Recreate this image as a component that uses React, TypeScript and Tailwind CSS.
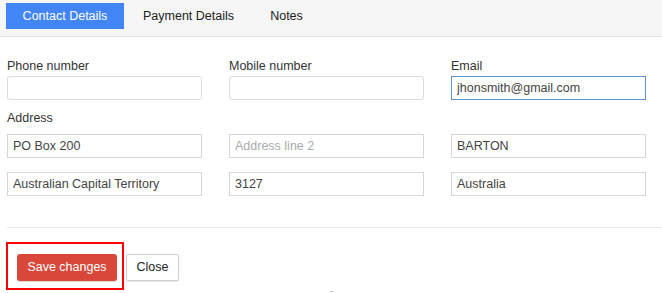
import { useState } from "react";

const tabs = ["Contact Details", "Payment Details", "Notes"];
const tabWidths = ["w-[118px]", "w-[129px]", "w-[67px]"];

function Field({ label, value, focused }: { label: string; value: string; focused?: boolean }) {
  return (
    <div className="flex flex-col">
      <label className="h-[16px] leading-[16px] text-[12.5px] text-[#333]">{label}</label>
      <input
        defaultValue={value}
        className={
          focused
            ? "mt-[2px] h-[24px] w-full border border-[#5b93d3] bg-white px-[5px] text-[12.5px] text-[#444] outline-none"
            : "mt-[2px] h-[24px] w-full rounded-[3px] border border-[#dcdcdc] bg-white px-[5px] text-[12.5px] text-[#444] outline-none"
        }
      />
    </div>
  );
}

function AddrInput({ value, placeholder }: { value?: string; placeholder?: string }) {
  return (
    <input
      defaultValue={value}
      placeholder={placeholder}
      className="h-[24px] w-full border border-[#d6d6d6] bg-white px-[5px] text-[12.5px] text-[#444] placeholder:text-[#aaa] outline-none"
    />
  );
}

export default function App() {
  const [tab, setTab] = useState(0);

  return (
    <div className="w-[662px] h-[293px] overflow-hidden bg-white font-['Liberation_Sans',Arial,sans-serif] text-[#333]">
      <div className="h-[37px] bg-[#f6f6f6] border-b border-[#e2e2e2] flex items-start pt-[3px] pl-[6px]">
        {tabs.map((t, i) => (
          <button
            key={t}
            onClick={() => setTab(i)}
            className={
              (tab === i ? "bg-[#4285f4] text-white " : "text-[#222] ") +
              tabWidths[i] +
              " h-[26px] text-[12.5px] text-center"
            }
          >
            {t}
          </button>
        ))}
      </div>

      <div className="px-[7px] pt-[21px]">
        <div className="grid grid-cols-[195px_195px_195px] gap-x-[27px]">
          <Field label="Phone number" value="" />
          <Field label="Mobile number" value="" />
          <Field label="Email" value="jhonsmith@gmail.com" focused />
        </div>

        <div className="mt-[10px] h-[16px] leading-[16px] text-[12.5px]">Address</div>
        <div className="mt-[8px] grid grid-cols-[195px_195px_195px] gap-x-[27px] gap-y-[14px]">
          <AddrInput value="PO Box 200" />
          <AddrInput placeholder="Address line 2" />
          <AddrInput value="BARTON" />
          <AddrInput value="Australian Capital Territory" />
          <AddrInput value="3127" />
          <AddrInput value="Australia" />
        </div>

        <div className="mt-[31px] -mr-[7px] border-t border-[#e8e8e8]" />

        <div className="mt-[14px] -ml-px flex items-start">
          <div className="border-2 border-[#f00] pl-[9px] pr-[5px] pt-[10px] pb-[7px]">
            <button className="h-[27px] w-[100px] rounded-[3px] bg-[#d8473a] text-[12.5px] text-white shadow-[0_1px_1px_rgba(0,0,0,0.15)]">
              Save changes
            </button>
          </div>
          <button className="mt-[12px] ml-[2px] h-[27px] w-[53px] rounded-[2px] border border-[#d0d0d0] bg-white text-[12.5px] text-[#222] shadow-[0_1px_1px_rgba(0,0,0,0.1)]">
            Close
          </button>
        </div>
        <div className="mt-px flex justify-center">
          <div className="h-px w-[3px] bg-[#bbb]" />
        </div>
      </div>
    </div>
  );
}
